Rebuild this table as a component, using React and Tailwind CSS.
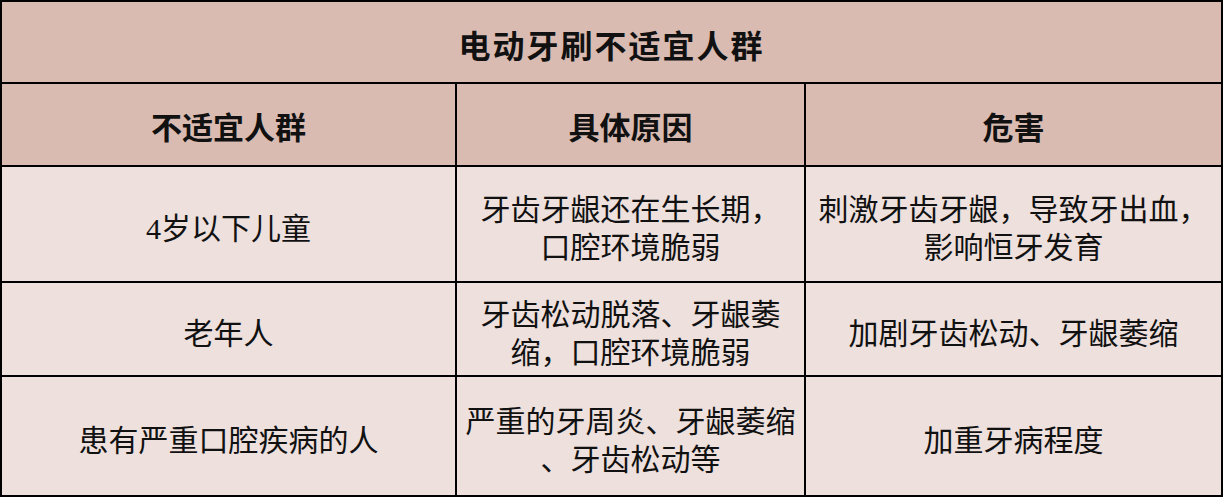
export default function App() {
  const rows = [
    {
      h: "h-[116px]",
      who: ["4岁以下儿童"],
      why: ["牙齿牙龈还在生长期，", "口腔环境脆弱"],
      harm: ["刺激牙齿牙龈，导致牙出血，", "影响恒牙发育"],
    },
    {
      h: "h-[94px]",
      who: ["老年人"],
      why: ["牙齿松动脱落、牙龈萎", "缩，口腔环境脆弱"],
      harm: ["加剧牙齿松动、牙龈萎缩"],
    },
    {
      h: "h-[120px]",
      who: ["患有严重口腔疾病的人"],
      why: ["严重的牙周炎、牙龈萎缩", "、牙齿松动等"],
      harm: ["加重牙病程度"],
    },
  ];

  const cell = "flex flex-col items-center justify-center text-center pt-[10px] border-r-2 border-b-2 border-black";

  return (
    <div className="bg-white w-[1224px] h-[498px] text-[#111] font-['Liberation_Serif','Noto_Sans_CJK_SC',serif]">
      <div className="w-[1223px] border-t-2 border-l-2 border-black">
        {/* Title */}
        <div className="h-[82px] pt-[9px] bg-[#d9bbb1] border-r-2 border-b-2 border-black flex items-center justify-center text-[32px] font-bold tracking-[2px]">
          电动牙刷不适宜人群
        </div>

        <div className="grid grid-cols-[455px_349px_417px]">
          {/* Header */}
          {["不适宜人群", "具体原因", "危害"].map((t) => (
            <div key={t} className={`${cell} h-[83px] bg-[#d9bbb1] text-[31px] font-bold`}>
              {t}
            </div>
          ))}

          {rows.map((r) => (
            <>
              {[r.who, r.why, r.harm].map((lines, i) => (
                <div key={i} className={`${cell} ${r.h} bg-[#ede0dd] text-[30px] leading-[38px] whitespace-nowrap`}>
                  {lines.map((l) => (
                    <div key={l}>{l}</div>
                  ))}
                </div>
              ))}
            </>
          ))}
        </div>
      </div>
    </div>
  );
}
